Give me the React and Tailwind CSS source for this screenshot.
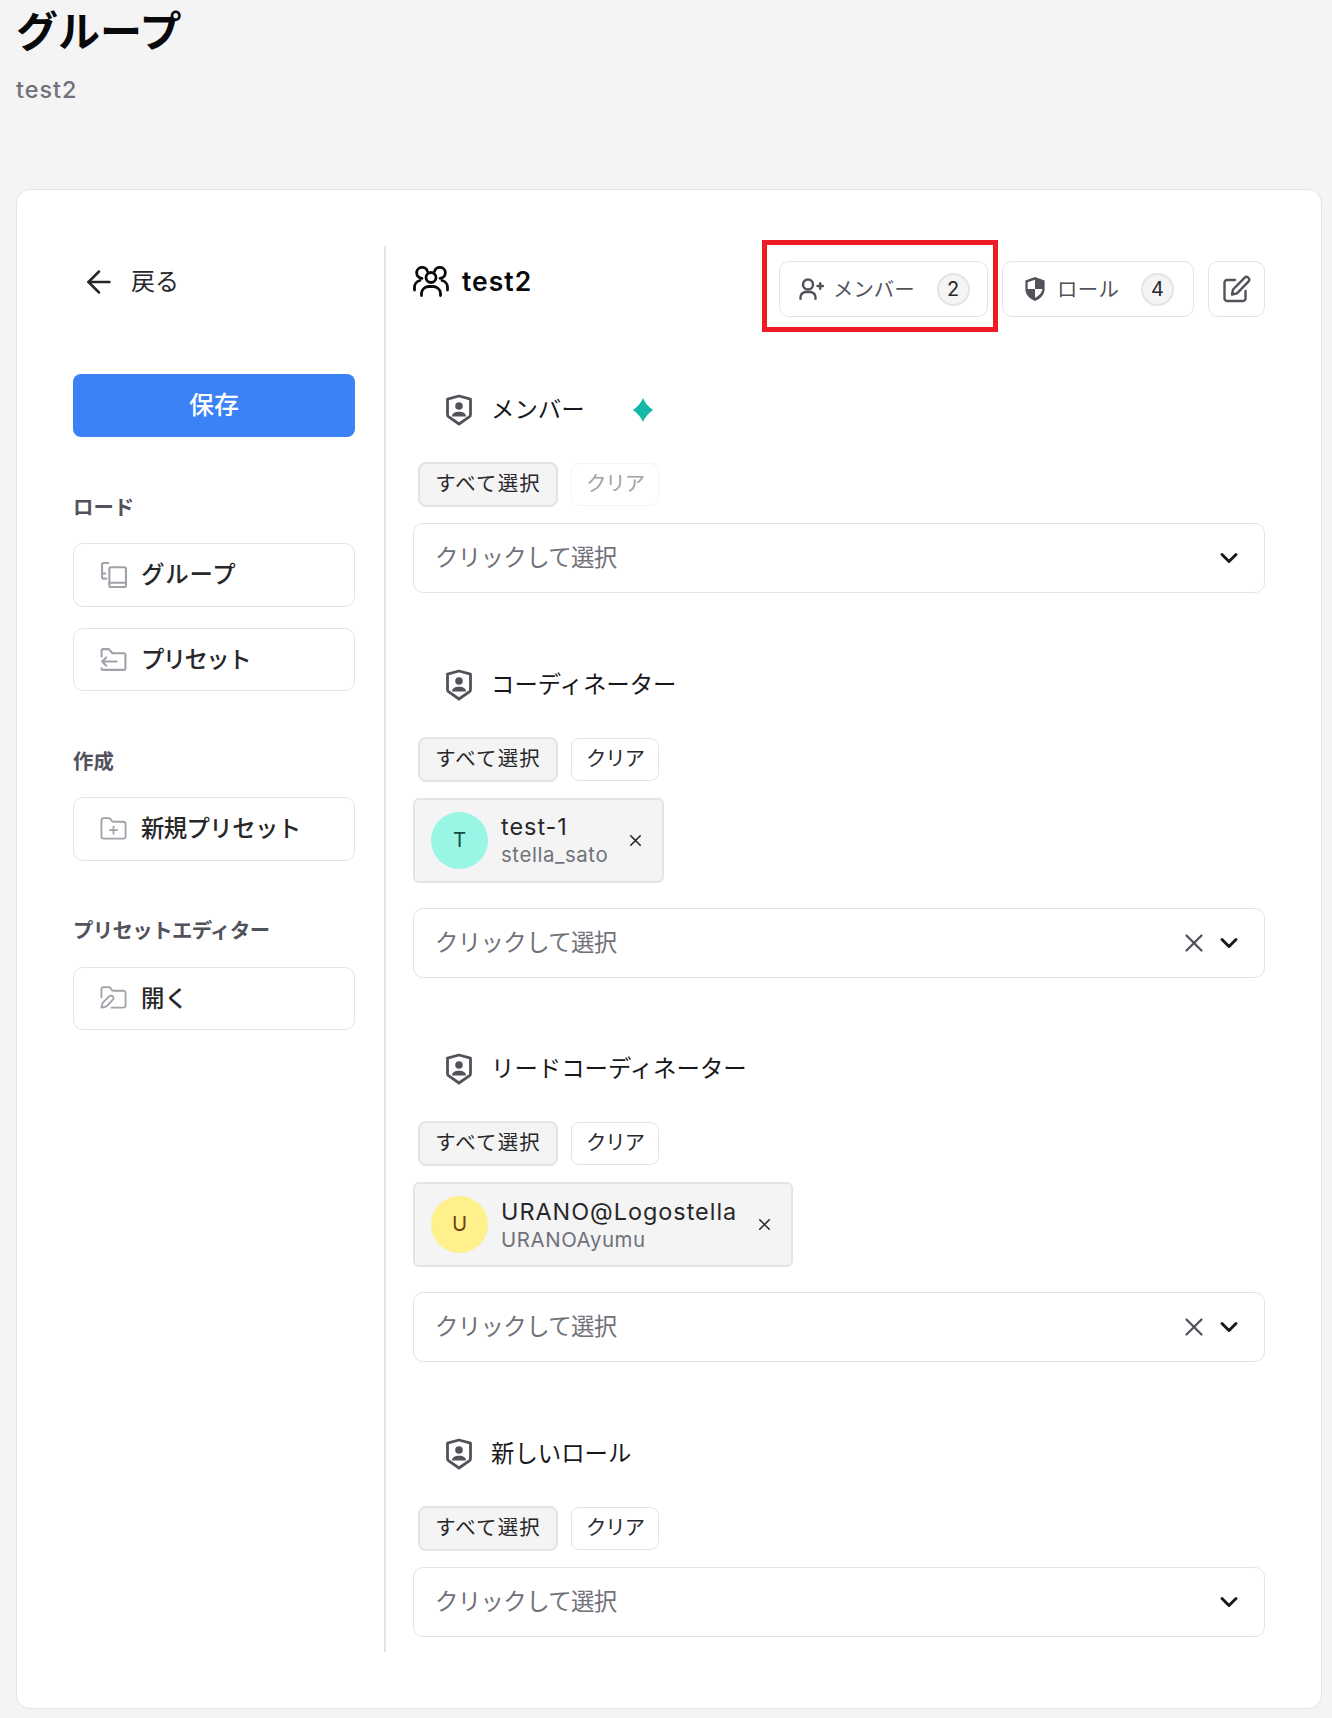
import React from "react";
import { ArrowLeft, ChevronDown, FolderPlus, FolderPen, X } from "lucide-react";

const UsersIcon = ({ className }) => (
  <svg viewBox="0 0 36 32" fill="none" stroke="currentColor" strokeWidth="2.800" strokeLinecap="round" strokeLinejoin="round" className={className}>
    <circle cx="18" cy="12.500" r="5" />
    <path d="M8.500 30.500v-2.500a7.500 7.500 0 0 1 7-6.500h5a7.500 7.500 0 0 1 7 6.500v2.500" />
    <path d="M14.500 6.500a5.500 5.500 0 1 0-5.500 6.800" />
    <path d="M21.500 6.500a5.500 5.500 0 1 1 5.500 6.800" />
    <path d="M1.500 25v-2.500a7 7 0 0 1 5.500-7" />
    <path d="M34.500 25v-2.500a7 7 0 0 0-5.500-7" />
  </svg>
);

const ShieldUserIcon = ({ className }) => (
  <svg viewBox="0 0 28 32" fill="none" className={className}>
    <path d="M14 2l11.5 3.2v15.3c0 1-.5 1.9-1.3 2.4L14 30 3.800 22.900c-.8-.5-1.300-1.400-1.300-2.400V5.200L14 2z" stroke="currentColor" strokeWidth="2.800" strokeLinejoin="round" />
    <circle cx="14" cy="12" r="3.800" fill="currentColor" />
    <path d="M7 22.500c0-3 2.600-4.800 7-4.800s7 1.800 7 4.800H7z" fill="currentColor" />
  </svg>
);

const ShieldHalfIcon = ({ className }) => (
  <svg viewBox="0 0 24 28" className={className}>
    <path d="M12 1l10.500 3.600V14c0 6-4.500 10.800-10.500 13C6 24.800 1.500 20 1.500 14V4.600L12 1z" fill="currentColor" />
    <path d="M12 4v10H4V6.700L12 4zM12 14h8c-.4 4-3.400 7.400-8 9.500V14z" fill="#ffffff" />
  </svg>
);

const UserPlusIcon = ({ className }) => (
  <svg viewBox="0 0 25 22" fill="none" stroke="currentColor" strokeWidth="2.400" strokeLinecap="round" className={className}>
    <circle cx="9" cy="6.500" r="5" />
    <path d="M1.500 20.800v-1.300a6 6 0 0 1 4.500-5.500h6a6 6 0 0 1 4.500 5.500v1.300" />
    <path d="M18.500 8h5.500M21.200 5.200v5.600" />
  </svg>
);

const EditIcon = ({ className }) => (
  <svg viewBox="0 0 28 28" fill="none" stroke="currentColor" strokeWidth="2.400" strokeLinecap="round" strokeLinejoin="round" className={className}>
    <path d="M12 5H4a2.500 2.500 0 0 0-2.500 2.500v16A2.500 2.500 0 0 0 4 26h16a2.500 2.500 0 0 0 2.500-2.500V16" />
    <path d="M9 19.500l1-5L21.500 2.800a2.700 2.700 0 0 1 3.900 3.800L14 18.300l-5 1.200z" />
  </svg>
);

const BookCopyIcon = ({ className }) => (
  <svg viewBox="0 0 26 26" fill="none" stroke="currentColor" strokeWidth="2" strokeLinecap="round" strokeLinejoin="round" className={className}>
    <path d="M8 2H3.500A1.500 1.500 0 0 0 2 3.500v12A1.500 1.500 0 0 0 3.500 17H6" />
    <path d="M2 12h3" />
    <rect x="9" y="6" width="16" height="19" rx="1.500" />
    <path d="M9 21h16" />
  </svg>
);

const FolderBackIcon = ({ className }) => (
  <svg viewBox="0 0 26 24" fill="none" stroke="currentColor" strokeWidth="2" strokeLinecap="round" strokeLinejoin="round" className={className}>
    <path d="M1.500 9V3.500a1.500 1.500 0 0 1 1.500-1.500h5.500l3.500 4h11a1.500 1.500 0 0 1 1.500 1.500v13a1.500 1.500 0 0 1-1.500 1.500H3a1.500 1.500 0 0 1-1.500-1.500" />
    <path d="M16 14H2M6 10l-4 4 4 4" />
  </svg>
);

const SideButton = ({ icon, label, tracking }) => (
  <button className="flex h-[63.5px] w-full items-center rounded-[10px] border border-[#e4e4e7] bg-white pl-[25px] text-[23.400px] font-medium text-[#27272a]">
    <span className="mr-[13px] flex w-[29px] justify-center text-[#a1a1aa]">{icon}</span>
    <span className={tracking}>{label}</span>
  </button>
);

const SideLabel = ({ children, className }) => (
  <div className={`h-[30px] text-[20.400px] leading-[30px] font-semibold text-[#52525b] ${className}`}>{children}</div>
);

const Chip = ({ initial, name, sub, avatar }) => (
  <div className="mt-4 flex h-[85px] w-fit items-center rounded-[6px] border-2 border-[#e4e4e7] bg-[#f4f4f5] pr-[17px] pl-4">
    <div className={`flex h-[57px] w-[57px] items-center justify-center rounded-full text-[20.400px] ${avatar}`}>{initial}</div>
    <div className="ml-[13px] flex flex-col">
      <span className="text-[23.400px] leading-[30px] tracking-[1px] text-[#27272a]">{name}</span>
      <span className="text-[20.400px] leading-[26px] tracking-[0.6px] text-[#71717a]">{sub}</span>
    </div>
    <X size={19} strokeWidth={2} className="ml-[18px] text-[#27272a]" />
  </div>
);

const Section = ({ title, marker, clearDisabled, chip, last }) => (
  <section className={last ? "" : "mb-[69.5px]"}>
    <div className="flex h-[44px] items-center pl-[32px]">
      <ShieldUserIcon className="h-[32px] w-[28px] text-[#52525b]" />
      <span className="ml-[18px] text-[23.400px] text-[#18181b]">{title}</span>
      {marker && (
        <svg viewBox="0 0 20 24" className="ml-[48px] h-[24px] w-[20px] text-[#14b8a6]">
          <path d="M10 0c1.800 4.500 5 8.500 10 12-5 3.500-8.200 7.500-10 12-1.800-4.500-5-8.500-10-12C5 8.500 8.200 4.500 10 0z" fill="currentColor" />
        </svg>
      )}
    </div>
    <div className="mt-[30px] flex items-center gap-[13px] pl-[5px]">
      <button className="flex h-[45px] w-[140px] items-center justify-center rounded-[8px] border-2 border-[#e4e4e7] bg-[#f4f4f5] text-[20.400px] tracking-[1.200px] text-[#27272a]">
        すべて選択
      </button>
      <button
        className={`flex h-[43px] w-[88px] items-center justify-center rounded-[8px] border text-[20.400px] tracking-[-1px] ${
          clearDisabled ? "border-[#f4f4f5] text-[#a1a1aa]" : "border-[#e4e4e7] text-[#27272a]"
        }`}
      >
        クリア
      </button>
    </div>
    {chip}
    <div className={`flex h-[70px] items-center rounded-[10px] border border-[#e4e4e7] bg-white pr-[21px] pl-[21px] ${chip ? "mt-[25px]" : "mt-[16px]"}`}>
      <span className="flex-1 text-[23.400px] tracking-[-0.6px] text-[#71717a]">クリックして選択</span>
      {chip && <X size={30} strokeWidth={1.800} className="mr-[6px] text-[#52525b]" />}
      <ChevronDown size={28} strokeWidth={2.500} className="text-[#18181b]" />
    </div>
  </section>
);

export default function App() {
  return (
    <div lang="ja" className="min-h-screen bg-[#f4f4f5] pr-[10px] pb-[10px] pl-[16px] font-['Inter','Noto_Sans_CJK_JP',sans-serif]">
      <h1 className="pt-[7px] text-[42px] leading-[50px] font-bold text-[#09090b]">グループ</h1>
      <p className="mt-[17px] text-[23.400px] leading-[32px] font-medium tracking-[1px] text-[#71717a]">test2</p>

      <div className="mt-[83px] flex rounded-[14px] border border-[#e4e4e7] bg-white p-[56px]">
        <aside className="mr-[29px] w-[282px] shrink-0">
          <div className="flex h-[71px] items-center pl-[8px] text-[24px] text-[#27272a]">
            <ArrowLeft size={36} strokeWidth={1.700} />
            <span className="ml-[14px]">戻る</span>
          </div>
          <button className="mt-[57px] h-[63px] w-full rounded-[8px] bg-[#3b82f6] text-[25px] font-medium text-white">保存</button>

          <SideLabel className="mt-[56px] mb-[20px]">ロード</SideLabel>
          <div className="flex flex-col gap-[21px]">
            <SideButton icon={<BookCopyIcon className="h-[27px] w-[27px]" />} label="グループ" tracking="tracking-[0.8px]" />
            <SideButton icon={<FolderBackIcon className="h-[25px] w-[27px]" />} label="プリセット" tracking="tracking-[-1.600px]" />
          </div>

          <SideLabel className="mt-[56px] mb-[20px]">作成</SideLabel>
          <SideButton icon={<FolderPlus size={30} strokeWidth={1.500} />} label="新規プリセット" tracking="tracking-[-0.6px]" />

          <SideLabel className="mt-[55px] mb-[21px] tracking-[-0.6px]">プリセットエディター</SideLabel>
          <SideButton icon={<FolderPen size={30} strokeWidth={1.500} />} label="開く" />
        </aside>

        <main className="min-w-0 flex-1 border-l-2 border-[#e4e4e7] pb-[15px] pl-[27px]">
          <div className="mb-[72px] flex h-[70px] justify-between">
            <div className="flex items-center">
              <UsersIcon className="h-[32px] w-[36px] text-[#09090b]" />
              <span className="ml-[13px] pt-[1px] text-[26.500px] font-semibold tracking-[1px] text-[#09090b]">test2</span>
            </div>
            <div className="mt-[15px] flex gap-[14px]">
              <div className="relative">
                <button className="flex h-[56px] w-[209px] items-center rounded-[10px] border border-[#e4e4e7] pl-[19px] text-[20.400px] text-[#52525b]">
                  <UserPlusIcon className="h-[22px] w-[25px]" />
                  <span className="ml-[9px] pt-[2px]">メンバー</span>
                  <span className="ml-[22px] flex h-[33px] w-[33px] items-center justify-center rounded-full border-2 border-[#e4e4e7] bg-[#f4f4f5] text-[20px] text-[#27272a]">2</span>
                </button>
                <div className="absolute -top-[21px] -right-[10px] -bottom-[16px] -left-[17px] border-[5px] border-[#ed1c24]" />
              </div>
              <button className="flex h-[56px] w-[192px] items-center rounded-[10px] border border-[#e4e4e7] pl-[21px] text-[20.400px] text-[#52525b]">
                <ShieldHalfIcon className="h-[26px] w-[22px]" />
                <span className="ml-[11px] pt-[2px] tracking-[0.3px]">ロール</span>
                <span className="ml-[22px] flex h-[33px] w-[33px] items-center justify-center rounded-full border-2 border-[#e4e4e7] bg-[#f4f4f5] text-[20px] text-[#27272a]">4</span>
              </button>
              <button className="flex h-[56px] w-[57px] items-center justify-center rounded-[10px] border border-[#e4e4e7] text-[#52525b]">
                <EditIcon className="h-[28px] w-[28px]" />
              </button>
            </div>
          </div>

          <Section title="メンバー" marker clearDisabled />
          <Section
            title="コーディネーター"
            chip={<Chip initial="T" name="test-1" sub="stella_sato" avatar="bg-[#99f6e4] text-[#134e4a]" />}
          />
          <Section
            title="リードコーディネーター"
            chip={<Chip initial="U" name="URANO@Logostella" sub="URANOAyumu" avatar="bg-[#fef08a] text-[#713f12]" />}
          />
          <Section title="新しいロール" last />
        </main>
      </div>
    </div>
  );
}
